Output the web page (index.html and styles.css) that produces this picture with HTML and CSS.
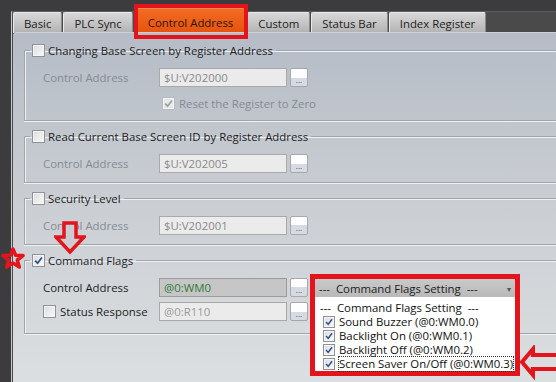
FILE: index.html
```html
<!DOCTYPE html>
<html lang="en">
<head>
   <meta charset="UTF-8">
   <title>Control Address</title>
   <link rel="stylesheet" href="styles.css">
</head>

<body>

<div class="window">
   <div class="tabs">
      <span class="tab">Basic</span>
      <span class="tab">PLC Sync</span>
      <span class="tab active">Control Address</span>
      <span class="tab">Custom</span>
      <span class="tab">Status Bar</span>
      <span class="tab">Index Register</span>
   </div>

   <div class="panel">
      <fieldset class="group">
         <legend><span class="cb"></span>Changing Base Screen by Register Address</legend>
         <div class="row off">
            <span class="label">Control Address</span>
            <span class="field">$U:V202000</span>
            <span class="dots">...</span>
         </div>
         <div class="row off reset">
            <span class="cb on dim"><svg viewBox="0 0 9 9" width="9" height="9"><path d="M1.2 4.6 L3.6 7.2 L7.9 1.4" /></svg></span>
            Reset the Register to Zero
         </div>
      </fieldset>

      <fieldset class="group">
         <legend><span class="cb"></span>Read Current Base Screen ID by Register Address</legend>
         <div class="row off">
            <span class="label">Control Address</span>
            <span class="field">$U:V202005</span>
            <span class="dots">...</span>
         </div>
      </fieldset>

      <fieldset class="group">
         <legend><span class="cb"></span>Security Level</legend>
         <div class="row off">
            <span class="label">Control Address</span>
            <span class="field">$U:V202001</span>
            <span class="dots">...</span>
         </div>
      </fieldset>

      <fieldset class="group last">
         <legend><span class="cb on"><svg viewBox="0 0 9 9" width="9" height="9"><path d="M1.2 4.6 L3.6 7.2 L7.9 1.4" /></svg></span>Command Flags</legend>
         <div class="row">
            <span class="label">Control Address</span>
            <span class="field live">@0:WM0</span>
            <span class="dots">...</span>
         </div>
         <div class="row tight">
            <span class="label"><span class="cb"></span>Status Response</span>
            <span class="field faint">@0:R110</span>
            <span class="dots">...</span>
         </div>
      </fieldset>
   </div>
</div>

<!-- annotations drawn over the dialog -->
<div class="tab-mark"></div>

<svg class="down-arrow" width="32" height="34" viewBox="0 0 32 34">
   <path d="M10 2 H22 V16 H30 L16 31 L2 16 H10 Z" />
</svg>

<svg class="star" width="26" height="22" viewBox="0 0 26 22">
   <path d="M13 2 L15.6 8.2 L23 8.6 L17.3 13 L19.3 20 L13 16 L6.7 20 L8.7 13 L3 8.6 L10.4 8.2 Z" />
</svg>

<svg class="left-arrow" width="40" height="36" viewBox="0 0 40 36">
   <path d="M3 17 L14 4 V10 H42 V24 H14 V30 Z" />
</svg>

<div class="callout">
   <div class="combo">
      <span>---&nbsp;&nbsp;Command Flags Setting&nbsp;&nbsp;---</span>
      <span class="caret">&#9662;</span>
   </div>
   <ul class="options">
      <li class="head">---&nbsp;&nbsp;Command Flags Setting&nbsp;&nbsp;---</li>
      <li><span class="cb small on"><svg viewBox="0 0 9 9" width="8" height="8"><path d="M1.2 4.6 L3.6 7.2 L7.9 1.4" /></svg></span>Sound Buzzer (@0:WM0.0)</li>
      <li><span class="cb small on"><svg viewBox="0 0 9 9" width="8" height="8"><path d="M1.2 4.6 L3.6 7.2 L7.9 1.4" /></svg></span>Backlight On (@0:WM0.1)</li>
      <li><span class="cb small on"><svg viewBox="0 0 9 9" width="8" height="8"><path d="M1.2 4.6 L3.6 7.2 L7.9 1.4" /></svg></span>Backlight Off (@0:WM0.2)</li>
      <li><span class="cb small on"><svg viewBox="0 0 9 9" width="8" height="8"><path d="M1.2 4.6 L3.6 7.2 L7.9 1.4" /></svg></span><span class="focus">Screen Saver On/Off (@0:WM0.3)</span></li>
   </ul>
</div>

</body>
</html>
```

FILE: styles.css
```css
html {
   height: 100%;
   overflow: hidden;
}

body {
   margin: 0;
   height: 100%;
   background: #3c3c3f;
   font-family: "Open Sans", "Noto Sans", sans-serif;
   font-size: 11.4px;
   color: #1e1e1e;
   overflow: hidden;
}

.window {
   margin: 11px 0 0 11px;
   height: calc(100% - 12px);
   border-left: 1px solid #c6c8ca;
   border-top: 1px solid #5c5c5c;
   background: #4a4a4a;
   display: flex;
   flex-direction: column;
}

/* tab strip */
.tabs {
   display: flex;
   padding-left: 1px;
   height: 20px;
}

.tab {
   height: 20px;
   line-height: 21px;
   padding: 0 10px;
   margin-right: 1px;
   color: #222;
   background: linear-gradient(#d8d8d8, #b2b2b2);
   border: 1px solid #e9e9e9;
   border-bottom: none;
   border-right-color: #8a8a8a;
   border-radius: 2px 2px 0 0;
}

.tab.active {
   margin: -4px 2px 0 2px;
   padding: 0 11px;
   height: 25px;
   line-height: 27px;
   background: linear-gradient(#f36b22, #e4520c);
   border-color: #f58a4e;
   color: #2a1406;
}

/* page body */
.panel {
   flex: 1;
   margin-left: 1px;
   padding: 9px 0 0 11px;
   border-top: 1px solid #cdd1d6;
   border-radius: 4px 0 0 0;
   background: linear-gradient(#b5bcc6, #c9cdd2 45%, #dcdfe1);
   overflow: hidden;
}

.group {
   margin: 0 -40px 7px 0;
   padding: 0 0 9px 18px;
   border: 1px solid #a1a6ac;
   box-shadow: inset 1px 1px 0 #eef0f2, 0 1px 0 #eef0f2;
   min-width: 0;
}

.group.last {
   padding-bottom: 12px;
}

.group legend {
   display: flex;
   align-items: center;
   gap: 3px;
   height: 16px;
   margin-left: -13px;
   padding: 0 3px 0 2px;
   color: #1c1c1c;
}

.row {
   display: flex;
   align-items: center;
   height: 19px;
   margin-top: 10px;
}

.row.tight {
   margin-top: 5px;
}

.row .label {
   width: 116px;
   display: flex;
   align-items: center;
   gap: 4px;
}

.row.off {
   color: #858b93;
}

.row.reset {
   padding-left: 119px;
   height: 16px;
   margin-top: 8px;
   gap: 4px;
}

.field {
   width: 122px;
   height: 17px;
   line-height: 17px;
   padding: 0 0 0 4px;
   margin-right: 3px;
   border: 1px solid #a9a9a9;
   background: #ebebeb;
   color: #8a8a8a;
}

.field.live {
   background: #c6c6c6;
   border-color: #9c9c9c;
   color: #2f7a35;
}

.field.faint {
   color: #9a9a9a;
}

.dots {
   width: 16px;
   height: 17px;
   border: 1px solid #a6a8ab;
   border-radius: 2px;
   background: linear-gradient(#fdfdfd 50%, #d6dbe3 50%);
   font-size: 8px;
   line-height: 22px;
   text-align: center;
   color: #444;
}

/* check boxes */
.cb {
   display: inline-flex;
   align-items: center;
   justify-content: center;
   width: 11px;
   height: 11px;
   flex: none;
   border: 1px solid #8f9297;
   background: linear-gradient(135deg, #d9dbde, #fbfbfb);
   box-shadow: inset 0 0 0 1px #f4f4f4;
}

.cb svg path {
   fill: none;
   stroke: #2e4f8f;
   stroke-width: 1.7;
}

.cb.dim {
   border-color: #b8bcc2;
   background: #e6e8ea;
}

.cb.dim svg path {
   stroke: #9aa1ab;
}

.cb.small {
   width: 10px;
   height: 10px;
}

/* dropdown list with its red frame */
.callout {
   position: absolute;
   left: 310px;
   top: 274px;
   width: 200px;
   border: 5px solid #e3141c;
}

.combo {
   display: flex;
   justify-content: space-between;
   align-items: center;
   height: 18px;
   padding: 0 4px;
   background: linear-gradient(#c9c9c9, #b9b9b9);
   color: #1c1c1c;
}

.combo .caret {
   font-size: 8px;
   color: #555;
}

.options {
   list-style: none;
   margin: 0;
   padding: 4px 0 2px 0;
   height: 68px;
   background: #fff;
}

.options li {
   display: flex;
   align-items: center;
   gap: 4px;
   height: 14px;
   line-height: 14px;
   padding-left: 8px;
   color: #111;
   white-space: nowrap;
}

.options li.head {
   padding-left: 5px;
}

.options .focus {
   outline: 1px dotted #333;
}

/* annotation marks */
.tab-mark {
   position: absolute;
   left: 134px;
   top: 4px;
   width: 106px;
   height: 27px;
   border: 4px solid #e3141c;
}

.down-arrow {
   position: absolute;
   left: 54px;
   top: 221px;
}

.down-arrow path {
   fill: #cacdd1;
   stroke: #e3141c;
   stroke-width: 3.5;
}

.star {
   position: absolute;
   left: 0;
   top: 247px;
}

.star path {
   fill: none;
   stroke: #e3141c;
   stroke-width: 3.5;
   stroke-linejoin: round;
}

.left-arrow {
   position: absolute;
   left: 519px;
   top: 345px;
}

.left-arrow path {
   fill: none;
   stroke: #e3141c;
   stroke-width: 4;
}
```
